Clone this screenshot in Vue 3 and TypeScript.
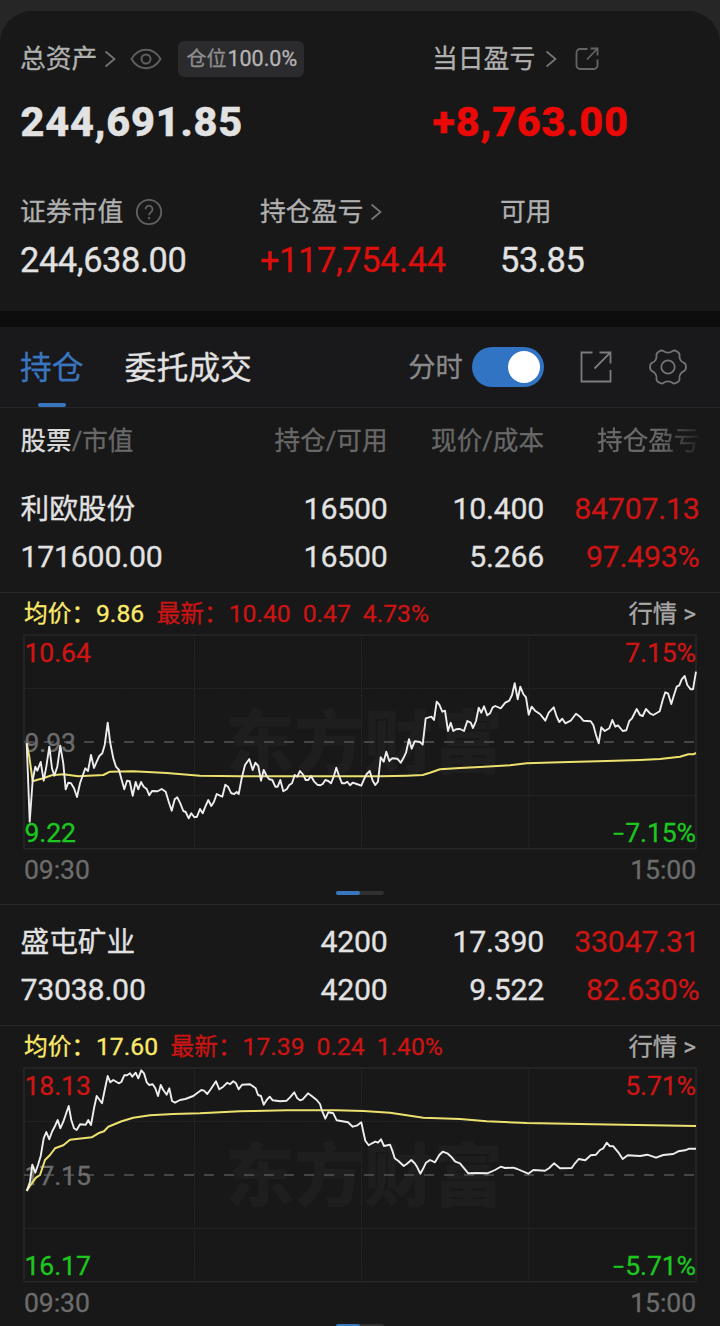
<script setup lang="ts">
type Segment = [offset: number, points: string]

interface Holding {
  name: string
  value: string
  qty: string
  available: string
  price: string
  cost: string
  profit: string
  rate: string
  avg: string
  latest: string[]
  high: string
  mid: string
  low: string
  percent: string
  priceLine: string
  avgLine: string
}

// Series are sampled in thirds of a pixel; each segment has its own x origin.
function trace(dy: number, segments: Segment[]): string {
  return segments
    .flatMap(([dx, pts]) =>
      pts.split(' ').map((p) => {
        const [x, y] = p.split(',').map(Number)
        return `${((x + dx) / 3).toFixed(1)},${((y - dy) / 3).toFixed(1)}`
      }),
    )
    .join(' ')
}

function gearPath(cx: number, cy: number): string {
  const pts: [number, number][] = []
  for (let i = 0; i < 6; i++) {
    for (const [r, off] of [[14.6, -19], [18.3, -11], [18.3, 11], [14.6, 19]]) {
      const a = ((i * 60 + off) * Math.PI) / 180
      pts.push([cx + r * Math.cos(a), cy + r * Math.sin(a)])
    }
  }
  const mid = (a: [number, number], b: [number, number]) =>
    `${((a[0] + b[0]) / 2).toFixed(2)} ${((a[1] + b[1]) / 2).toFixed(2)}`
  let d = `M${mid(pts[pts.length - 1], pts[0])}`
  pts.forEach((p, i) => {
    d += `Q${p[0].toFixed(2)} ${p[1].toFixed(2)} ${mid(p, pts[(i + 1) % pts.length])}`
  })
  return d + 'Z'
}

const gear = gearPath(20, 20)

const holdings: Holding[] = [
  {
    name: '利欧股份', value: '171600.00', qty: '16500', available: '16500',
    price: '10.400', cost: '5.266', profit: '84707.13', rate: '97.493%',
    avg: '9.86', latest: ['10.40', '0.47', '4.73%'],
    high: '10.64', mid: '9.93', low: '9.22', percent: '7.15%',
    priceLine: trace(45, [
      [0, '80,370 89,605 98,480 106,440 112,452 122,426 131,482 139,440 148,380 156,445 163,467 172,440 181,377 190,430 197,508 205,488 213,490 222,505 231,531 240,490 256,445 264,453 273,405 282,444 290,425 298,408 307,400 314,375 323,308 331,370 340,415 348,440 357,450 365,480 373,508 381,482 389,484 398,527 407,486 415,508 423,486 431,500 440,507 448,526 456,513 473,514 485,507 497,515 506,545 515,572 524,538 532,532 541,550 550,573 557,576 566,595 574,580 583,592 591,590 600,567 608,580 616,560 625,540 634,558 642,545 650,522 660,527 667,530 676,494 684,500 694,520 703,522 710,516'],
      [660, '56,522 65,475 75,435 88,417 98,450 106,428 115,438 123,482 131,450 140,468 148,478 157,480 166,500 173,500 181,480 190,514 200,508 208,495 216,490 224,465 232,470 240,453 250,465 257,480 265,480 273,468 282,484 292,494 300,496 308,492 316,480 325,483 333,490 341,470 349,443 358,470 366,490 375,490 382,485 390,496 398,488 410,492 424,497 432,478 440,462 449,453 458,482 466,495 474,485 482,412 491,425 499,395 508,423 516,415 532,416 542,428 550,415 558,398 567,358 575,386 584,364 600,366 608,374 617,295 634,290 642,300 650,245 658,254 667,275 675,272 684,333 692,308 700,333 708,328 720,327'],
      [1380, '12,333 22,303 32,308 39,324 48,303 56,263 64,278 72,259 82,286 90,280 98,262 106,258 122,265 136,248 148,242 156,225 164,190 173,238 181,200 190,222 198,232 206,284 215,260 225,272 240,282 256,302 266,278 281,262 290,290 298,306 307,296 316,310 332,302 348,281 360,290 370,302 392,304 400,315 408,345 416,370 424,322 434,333 448,325 457,300 466,320 474,316 488,333 499,331 508,303 516,295 530,267 540,285 548,288 558,267 570,280 580,285 599,274 608,240 616,217 624,220 634,252 642,225 650,200 658,196 665,178 674,168 682,195 692,208 699,208 708,155'],
    ]),
    avgLine: trace(45, [
      [0, '80,370 88,410 98,484 110,480 130,475 155,466 190,463 235,469 310,465 330,455 400,454 500,459 600,467 720,469'],
      [660, '480,469 560,467 608,465 630,458 660,448 720,444'],
      [1380, '60,441 150,436 200,430 300,427 440,423 540,420 600,417 660,410 685,403 700,403 708,399'],
    ]),
  },
  {
    name: '盛屯矿业', value: '73038.00', qty: '4200', available: '4200',
    price: '17.390', cost: '9.522', profit: '33047.31', rate: '82.630%',
    avg: '17.60', latest: ['17.39', '0.24', '1.40%'],
    high: '18.13', mid: '17.15', low: '16.17', percent: '5.71%',
    priceLine: trace(144, [
      [0, '80,513 90,485 97,434 106,458 114,435 122,408 131,355 139,336 148,358 156,335 165,318 173,300 181,325 190,305 206,258 214,300 222,325 230,330 240,313 257,314 265,300 273,315 282,265 290,228 306,250 314,210 323,168 331,187 340,180 356,190 364,186 373,166 381,166 390,160 397,170 407,158 415,175 424,151 432,160 440,187 448,195 458,193 466,205 474,228 482,195 490,210 500,224 508,205 516,243 525,248 540,240 556,237 580,228 604,210 612,212 622,222 632,208 648,184 658,208'],
      [660, '10,200 22,188 30,193 40,184 48,190 56,208 66,194 90,193 107,205 114,225 123,228 131,254 140,240 149,230 158,241 180,244 200,242 210,232 223,217 232,235 240,241 248,238 264,220 275,228 290,240 300,252 306,272 316,296 325,277 340,280 350,301 384,307 398,320 410,317 424,307 430,335 436,362 446,376 456,370 466,365 474,368 483,358 492,378 510,374 518,395 524,415 536,424 551,438 560,432 574,420 584,430 592,442 601,461 610,445 618,428 630,420 645,427 658,405 668,395 682,400 695,412 706,425 720,430'],
      [1380, '8,440 25,460 50,459 82,460 105,450 122,440 135,444 160,443 172,447 205,461 220,450 255,452 268,444 282,430 300,445 335,444 345,430 356,417 376,421 392,406 408,404 420,390 430,385 440,368 449,378 460,379 475,397 488,417 503,406 540,408 562,404 588,413 610,405 640,402 655,394 675,391 688,386 708,386'],
    ]),
    avgLine: trace(144, [
      [0, '80,513 95,490 108,473 120,465 135,420 150,405 165,385 190,376 210,359 275,352 295,340 312,334 325,320 365,304 400,293 450,286 520,282 600,280 720,274'],
      [660, '100,273 200,271 350,271 430,273 510,278 560,286 610,293 720,297'],
      [1380, '80,304 200,309 400,313 708,318'],
    ]),
  },
]
</script>

<template>
  <main class="app">
    <div class="backdrop">
      <section class="summary">
        <div class="totals">
          <div class="cell wide">
            <div class="label">
              <span>总资产</span>
              <svg class="chev c1" width="12" height="18" viewBox="0 0 12 18"><path d="M1.5 1.5 10.5 9l-9 7.5" /></svg>
              <svg class="eye" width="32" height="22" viewBox="0 0 32 22">
                <path d="M1.5 11C5 5 10 1.8 16 1.8S27 5 30.5 11C27 17 22 20.2 16 20.2S5 17 1.5 11Z" />
                <circle cx="16" cy="11" r="4.5" />
              </svg>
              <span class="tag"><i>仓位</i><b>100.0%</b></span>
            </div>
            <div class="big">244,691.85</div>
          </div>
          <div class="cell">
            <div class="label">
              <span>当日盈亏</span>
              <svg class="chev c2" width="12" height="18" viewBox="0 0 12 18"><path d="M1.5 1.5 10.5 9l-9 7.5" /></svg>
              <svg class="share" width="24" height="24" viewBox="0 0 24 24">
                <path d="M12.5 2H5a3.500 3.500 0 0 0-3.500 3.500v13A3.500 3.500 0 0 0 5 22h14a3.500 3.500 0 0 0 3.500-3.500V12.500M12 12.500 22 2M15.500 1.500H22.500V8.500" />
              </svg>
            </div>
            <div class="big up-strong">+8,763.00</div>
          </div>
        </div>
        <div class="details">
          <div>
            <div class="label">
              <span>证券市值</span>
              <svg class="help" width="28" height="28" viewBox="0 0 28 28">
                <circle cx="14" cy="14" r="12.2" />
                <path d="M10.500 11.200a3.500 3.500 0 1 1 5.600 2.800c-1.400 1-2.100 1.700-2.100 3.300M14 19v2.200" />
              </svg>
            </div>
            <div class="mid">244,638.00</div>
          </div>
          <div>
            <div class="label">
              <span>持仓盈亏</span>
              <svg class="chev c3" width="12" height="18" viewBox="0 0 12 18"><path d="M1.5 1.5 10.5 9l-9 7.5" /></svg>
            </div>
            <div class="mid up-strong">+117,754.44</div>
          </div>
          <div>
            <div class="label"><span>可用</span></div>
            <div class="mid">53.85</div>
          </div>
        </div>
      </section>
    </div>

    <nav class="tabs">
      <span class="tab active">持仓</span>
      <span class="tab">委托成交</span>
      <span class="switch-label">分时</span>
      <span class="switch"><span class="knob" /></span>
      <svg class="open" width="32" height="32" viewBox="0 0 32 32">
        <path d="M12.500 1.500H1.500v29h29V19M14.500 17.500 30 1.800M19.500 1.500H30.500V12.500" />
      </svg>
      <svg class="gear" width="40" height="40" viewBox="0 0 40 40">
        <path :d="gear" />
        <circle cx="20" cy="20" r="6.7" />
      </svg>
    </nav>

    <div class="grid head">
      <span><em>股票</em>/市值</span>
      <span>持仓/可用</span>
      <span>现价/成本</span>
      <span class="fade">持仓盈亏</span>
    </div>

    <section v-for="h in holdings" :key="h.name" class="holding">
      <div class="grid row">
        <span class="name">{{ h.name }}</span>
        <span>{{ h.qty }}</span>
        <span>{{ h.price }}</span>
        <span class="up">{{ h.profit }}</span>
      </div>
      <div class="grid row">
        <span>{{ h.value }}</span>
        <span>{{ h.available }}</span>
        <span>{{ h.cost }}</span>
        <span class="up">{{ h.rate }}</span>
      </div>
      <div class="info">
        <span class="avg"><i>均价：</i>{{ h.avg }}</span>
        <span class="up"><i>最新：</i><b v-for="n in h.latest" :key="n">{{ n }}</b></span>
        <span class="more">行情 &gt;</span>
      </div>
      <svg class="chart" width="720" height="256" viewBox="0 0 720 256">
        <text class="mark" x="225" y="133" textLength="278" lengthAdjust="spacingAndGlyphs">东方财富</text>
        <g class="dots">
          <path d="M24 53.500H696M24 160.500H696M194.500 0V214M361.500 0V214M529 0V214" />
        </g>
        <rect class="frame" x="24" y="0" width="672" height="213.700" />
        <path class="dash" d="M24 107H694" />
        <text class="lbl axis" x="24.500" y="117">{{ h.mid }}</text>
        <polyline class="avg-line" :points="h.avgLine" />
        <polyline class="price-line" :points="h.priceLine" />
        <text class="lbl red" x="24.500" y="27">{{ h.high }}</text>
        <text class="lbl green" x="24.500" y="207">{{ h.low }}</text>
        <text class="lbl red" x="696" y="27" text-anchor="end">{{ h.percent }}</text>
        <text class="lbl green" x="696" y="207" text-anchor="end"><tspan class="minus">−</tspan>{{ h.percent }}</text>
        <text class="lbl axis" x="24" y="244">09:30</text>
        <text class="lbl axis" x="696" y="244" text-anchor="end">15:00</text>
      </svg>
      <div class="pager"><span /></div>
    </section>
  </main>
</template>

<style>
html,
body {
  background: #181818;
}
</style>

<style scoped>
.app {
  width: 720px;
  height: 1326px;
  overflow: hidden;
  background: #181818;
  color: #e2e2e2;
  font-family: Roboto, 'Noto Sans CJK SC', sans-serif;
  -webkit-text-stroke: 0.3px;
}
svg {
  display: block;
  flex: none;
  fill: none;
}
i,
em,
b {
  font-style: normal;
  font-weight: inherit;
}
.backdrop {
  height: 311px;
  padding-top: 11px;
  box-sizing: border-box;
  background: #262626;
}
.summary {
  height: 300px;
  box-sizing: border-box;
  padding: 29px 20px 0;
  border-radius: 32px 32px 0 0;
  background: #181818;
}
.totals,
.details {
  display: flex;
}
.cell.wide {
  width: 412px;
}
.label {
  display: flex;
  align-items: center;
  height: 37px;
  font-size: 25.8px;
  line-height: 37px;
  color: #b0b0b0;
  white-space: nowrap;
}
.label > span:first-child {
  padding-top: 2px;
}
.chev path {
  stroke: #747474;
  stroke-width: 1.8;
}
.c1 { margin-left: 7px; }
.c2 { margin-left: 10px; }
.c3 { margin-left: 7px; }
.eye {
  margin-left: 14px;
  stroke: #5e5e5e;
  stroke-width: 2;
}
.share {
  margin-left: 18px;
  stroke: #646464;
  stroke-width: 1.8;
}
.help {
  margin-left: 12px;
  stroke: #626262;
  stroke-width: 1.8;
}
.tag {
  display: flex;
  align-items: center;
  height: 36px;
  box-sizing: border-box;
  width: 126px;
  margin-left: 16px;
  padding-left: 8px;
  border-radius: 6px;
  background: #2b2b2d;
  font-size: 21.5px;
}
.tag i {
  width: 41px;
  padding-top: 2px;
  font-size: 20px;
  color: #8e8e8e;
}
.tag b {
  color: #b5b5b5;
}
.big {
  height: 60px;
  margin-top: 15px;
  padding-left: 0.5px;
  font-size: 41.5px;
  line-height: 60px;
  font-weight: 800;
  letter-spacing: 0.8px;
  -webkit-text-stroke: 0.5px;
}
.details {
  margin-top: 41px;
}
.details > div {
  flex: none;
  width: 240px;
}
.mid {
  height: 48px;
  margin-top: 6px;
  font-size: 34.4px;
  line-height: 48px;
  letter-spacing: -0.4px;
}
.up-strong {
  color: #ea0906;
}
.mid.up-strong {
  color: #dc0f0d;
}
.tabs {
  display: flex;
  align-items: center;
  height: 97px;
  box-sizing: border-box;
  padding-left: 20px;
  border-top: 16px solid #0d0d0d;
  background: #19191b;
  box-shadow: inset 0 -1px #272727;
  white-space: nowrap;
}
.tab {
  position: relative;
  height: 81px;
  font-size: 31.8px;
  line-height: 83px;
  margin-right: 41px;
}
.tab.active {
  color: #3a76bf;
}
.tab.active::after {
  content: '';
  position: absolute;
  left: 18px;
  bottom: 1px;
  width: 28px;
  height: 4px;
  border-radius: 2px;
  background: #3a76bf;
}
.switch-label {
  height: 81px;
  margin-left: 115.4px;
  font-size: 27.3px;
  line-height: 83px;
  color: #8a8a8a;
}
.switch {
  width: 72px;
  height: 40px;
  box-sizing: border-box;
  margin-left: 9px;
  margin-bottom: 1px;
  padding: 4px 4px 4px 36px;
  border-radius: 20px;
  background: #3074c3;
}
.knob {
  display: block;
  width: 32px;
  height: 32px;
  border-radius: 50%;
  background: #fff;
}
.open {
  margin-left: 36px;
  margin-bottom: 1px;
  stroke: #7c7c7c;
  stroke-width: 1.8;
}
.gear {
  margin-left: 36px;
  margin-bottom: 1px;
  stroke: #747474;
  stroke-width: 1.8;
}
.grid {
  display: grid;
  grid-template-columns: 200px 167px 156.5px 155.5px;
  padding-left: 20.5px;
  text-align: right;
  white-space: nowrap;
}
.grid > :first-child {
  text-align: left;
}
.head {
  height: 77px;
  padding-left: 20.5px;
  font-size: 25.6px;
  line-height: 67px;
  color: #686868;
}
.head em {
  color: #d8d8d8;
  font-weight: 500;
  -webkit-text-stroke: 0;
}
.fade {
  background: linear-gradient(90deg, #6a6a6a 74%, #222 100%);
  -webkit-background-clip: text;
  background-clip: text;
  color: transparent;
}
.row {
  height: 48px;
  font-size: 30.3px;
  line-height: 48px;
  letter-spacing: -0.25px;
}
.name {
  font-size: 28.7px;
  letter-spacing: 0;
}
.up {
  color: #cb1413;
}
.holding {
  height: 433px;
  box-sizing: border-box;
}
.info {
  display: flex;
  align-items: center;
  height: 43px;
  box-sizing: border-box;
  margin-top: 11px;
  padding: 0 24px;
  border-top: 1px solid #282828;
  font-size: 24.7px;
  line-height: 42px;
  white-space: nowrap;
}
.info i {
  display: inline-block;
  width: 72px;
  font-size: 23.7px;
}
.info .avg {
  color: #fbe96a;
  margin-right: 12.500px;
}
.info .up b {
  margin-right: 12px;
}
.more {
  margin-left: auto;
  font-size: 24.4px;
  color: #a8a8a8;
}
.chart {
  height: 256px;
  overflow: visible;
}
.mark {
  font-family: 'Noto Sans CJK SC', sans-serif;
  font-size: 69px;
  font-weight: 900;
  fill: #1e1e1e;
  -webkit-text-stroke: 0;
}
.frame {
  stroke: #272727;
  stroke-width: 1.5;
}
.dots {
  stroke: #303030;
  stroke-width: 1;
  stroke-dasharray: 1 1.5;
}
.dash {
  stroke: #545454;
  stroke-width: 1.6;
  stroke-dasharray: 10 10;
}
.lbl {
  font-size: 26.6px;
  letter-spacing: -0.1px;
  stroke-width: 0.3px;
}
.minus {
  font-size: 23px;
}
.axis { fill: #6c6c6c; stroke: #6c6c6c; }
.red { fill: #cf1514; stroke: #cf1514; }
.green { fill: #1cc71f; stroke: #1cc71f; }
.avg-line {
  stroke: #ece16e;
  stroke-width: 2;
  stroke-linejoin: round;
}
.price-line {
  stroke: #ededed;
  stroke-width: 1.9;
  stroke-linejoin: round;
}
.pager {
  width: 48px;
  height: 4px;
  margin: 0 auto;
  border-radius: 2px;
  background: #303030;
}
.pager span {
  display: block;
  width: 24px;
  height: 4px;
  border-radius: 2px;
  background: #3a76bf;
}
.holding + .holding {
  position: relative;
}
.holding + .holding::before {
  content: '';
  position: absolute;
  top: -14px;
  left: 0;
  right: 0;
  height: 1px;
  background: #282828;
}
</style>
